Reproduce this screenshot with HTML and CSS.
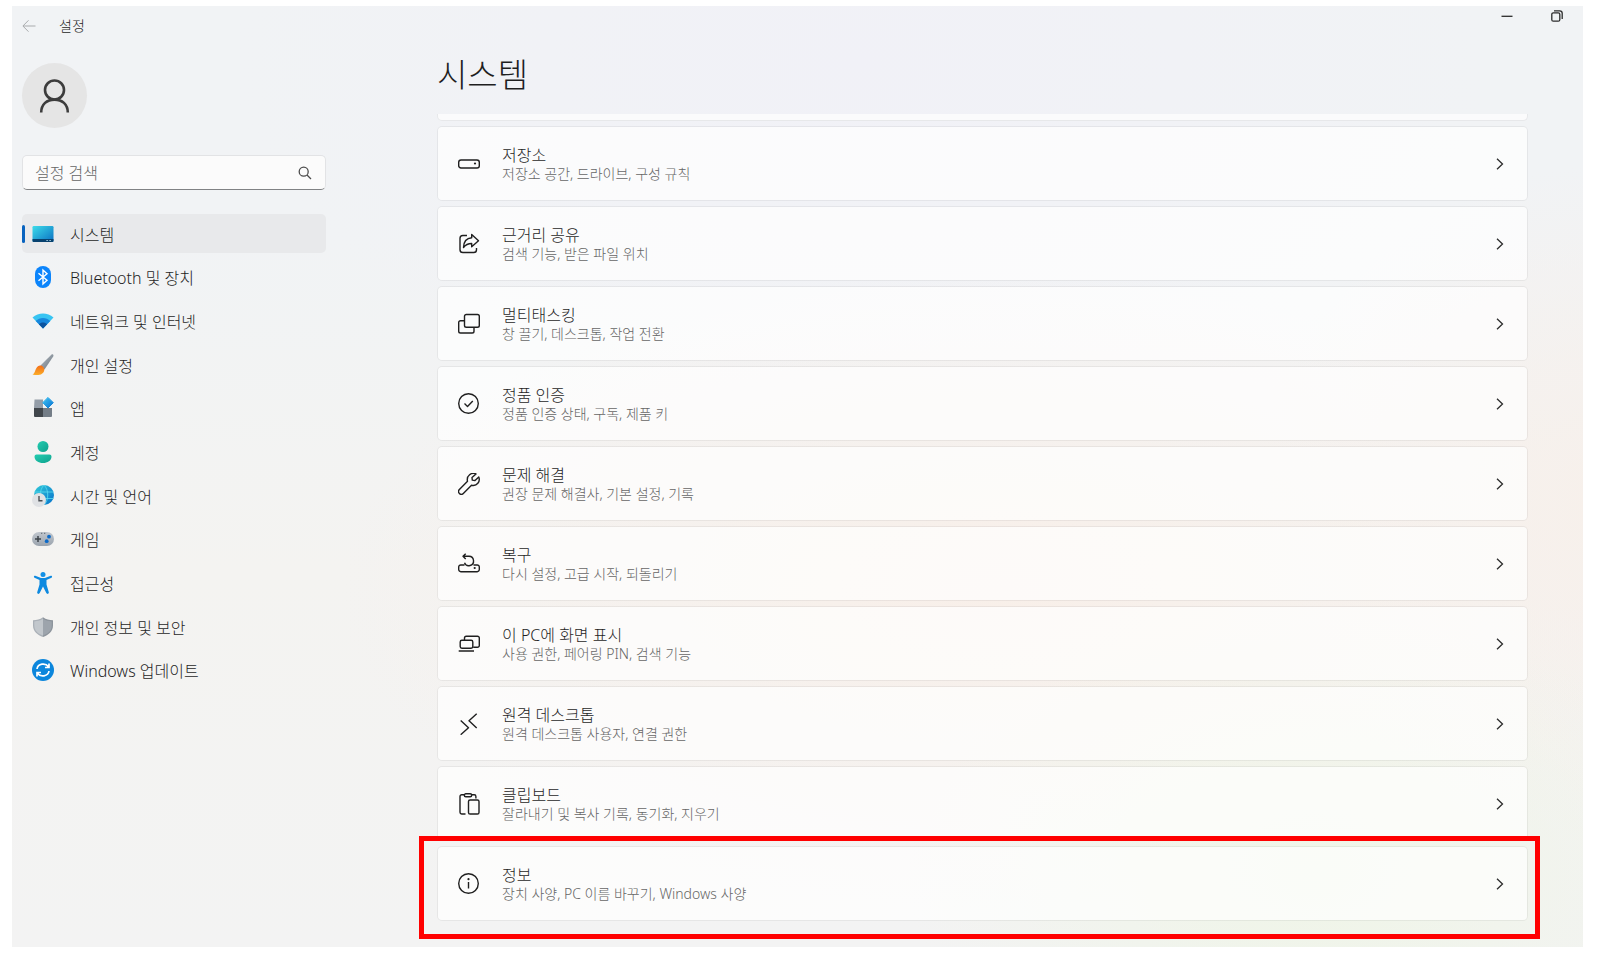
FILE: index.html
```html
<!DOCTYPE html>
<html lang="ko">
<head>
<meta charset="utf-8">
<meta name="viewport" content="width=device-width, initial-scale=1">
<title>설정</title>
<link rel="stylesheet" href="styles.css">
</head>
<body>
<div class="window">
  <header class="titlebar">
    <button class="back" type="button" aria-label="뒤로">
      <svg width="14" height="14" viewBox="0 0 14 14"><path d="M13.5 7H1M6.5 1.3L.9 7l5.600 5.700"/></svg>
    </button>
    <span class="app-name">설정</span>
    <div class="window-buttons">
      <button type="button" aria-label="최소화"><svg width="12" height="12" viewBox="0 0 12 12"><path d="M.5 6.300h11"/></svg></button>
      <button type="button" aria-label="이전 크기로 복원"><svg width="12" height="12" viewBox="0 0 12 12"><rect x=".8" y="2.800" width="8" height="8.400" rx="1.500"/><path d="M3 .8h5.700A2.500 2.500 0 0 1 11.200 3.300v5.700"/></svg></button>
    </div>
  </header>
  <div class="layout">
    <aside class="sidebar">
      <button class="avatar" type="button" aria-label="계정">
        <svg width="31" height="34" viewBox="0 0 31 34"><circle cx="15.500" cy="11" r="9.500"/><path d="M2.200 33.500C2.200 25 8 20.600 15.500 20.600S28.800 25 28.800 33.500"/></svg>
      </button>
      <form class="search">
        <input type="search" placeholder="설정 검색" aria-label="설정 검색">
        <button type="submit" aria-label="검색"><svg width="14" height="14" viewBox="0 0 14 14"><circle cx="5.700" cy="5.700" r="4.500"/><path d="M9 9l4 4"/></svg></button>
      </form>
      <nav class="nav" aria-label="설정 범주">
        <a class="nav-item current" href="#system" aria-current="page">
          <svg width="22" height="22" viewBox="0 0 22 22"><defs><linearGradient id="g-sys" x1="0" y1="0" x2="1" y2="1"><stop offset="0" stop-color="#3ddcea"/><stop offset="1" stop-color="#0a6fc2"/></linearGradient></defs><rect x=".5" y="3" width="21" height="16" rx="1.200" fill="url(#g-sys)"/><path d="M.5 16h21v1.800a1.200 1.200 0 0 1-1.200 1.200H1.700A1.200 1.200 0 0 1 .5 17.800z" fill="#08426f"/><path d="M14.500 17.500h1.200M17.500 17.500h1.200" stroke="#c7e8f7" stroke-width="1.200"/></svg>
          <span>시스템</span></a>
        <a class="nav-item" href="#bluetooth">
          <svg width="22" height="22" viewBox="0 0 22 22"><rect x="3" width="16" height="22" rx="8" fill="#0b84fb"/><path d="M6.500 7.300l8.500 7-4 3.700V4l4 3.700-8.500 7" fill="none" stroke="#fff" stroke-width="1.400"/></svg>
          <span>Bluetooth 및 장치</span></a>
        <a class="nav-item" href="#network">
          <svg width="22" height="22" viewBox="0 0 22 22"><path d="M.5 7.500C6.500 2 15.500 2 21.500 7.500L11 18.500z" fill="#38c4f2"/><path d="M3.700 10.900c4.200-4 10.400-4 14.600 0L11 18.500z" fill="#1787dc"/><path d="M6.900 14.200c2.300-2.200 5.900-2.200 8.200 0L11 18.500z" fill="#0b539f"/></svg>
          <span>네트워크 및 인터넷</span></a>
        <a class="nav-item" href="#personalization">
          <svg width="22" height="22" viewBox="0 0 22 22"><defs><linearGradient id="g-br" x1="0" y1="0" x2="1" y2="1"><stop offset="0" stop-color="#b4bcc4"/><stop offset="1" stop-color="#69737d"/></linearGradient><linearGradient id="g-tip" x1="0" y1="0" x2="0" y2="1"><stop offset="0" stop-color="#f36d18"/><stop offset="1" stop-color="#fbad28"/></linearGradient></defs><path d="M8.500 11.500L19.300.7c1.300-1 2.700.2 1.900 1.700L12.500 15.500z" fill="url(#g-br)"/><path d="M8 11.500c2-.2 4.400 2 4.300 4.200-.4 5.200-6.300 6.300-11.800 4.700 3.700-1.400 2.300-8.400 7.500-8.900z" fill="url(#g-tip)"/></svg>
          <span>개인 설정</span></a>
        <a class="nav-item" href="#apps">
          <svg width="22" height="22" viewBox="0 0 22 22"><defs><linearGradient id="g-app" x1="0" y1="0" x2="1" y2="1"><stop offset="0" stop-color="#42c6f5"/><stop offset="1" stop-color="#0871d0"/></linearGradient></defs><path d="M2.500 2.500H11V11H2z" fill="#949da8"/><path d="M2 11h9v9H3a1 1 0 0 1-1-1z" fill="#41464c"/><path d="M11 11h9v8a1 1 0 0 1-1 1h-8z" fill="#747d87"/><path d="M16 .4l5.300 5.300L16 11l-5.300-5.300z" fill="url(#g-app)" stroke="url(#g-app)" stroke-linejoin="round"/></svg>
          <span>앱</span></a>
        <a class="nav-item" href="#accounts">
          <svg width="22" height="22" viewBox="0 0 22 22"><defs><linearGradient id="g-acc" x1="0" y1="0" x2="1" y2="1"><stop offset="0" stop-color="#24cdb1"/><stop offset="1" stop-color="#0da18d"/></linearGradient></defs><circle cx="11" cy="5.500" r="5.500" fill="url(#g-acc)"/><path d="M4.500 13.500h13a2 2 0 0 1 2 2c0 4.300-4 6.500-8.500 6.500s-8.500-2.200-8.500-6.500a2 2 0 0 1 2-2z" fill="url(#g-acc)"/></svg>
          <span>계정</span></a>
        <a class="nav-item" href="#time">
          <svg width="22" height="22" viewBox="0 0 22 22"><defs><linearGradient id="g-gl" x1="0" y1="0" x2="1" y2="1"><stop offset="0" stop-color="#32cbd9"/><stop offset="1" stop-color="#0670cb"/></linearGradient></defs><circle cx="12" cy="10" r="10" fill="url(#g-gl)"/><path d="M2.500 7h19M2.500 13.500h19M12 0c-5 5-5 15 0 20M12 0c5 5 5 15 0 20" fill="none" stroke="#5bdcf0" stroke-width=".8"/><circle cx="7" cy="15" r="7" fill="#dfe1e4"/><path d="M7 11v4.800h3.500" fill="none" stroke="#4b5056" stroke-width="1.400"/></svg>
          <span>시간 및 언어</span></a>
        <a class="nav-item" href="#gaming">
          <svg width="22" height="22" viewBox="0 0 22 22"><defs><linearGradient id="g-gm" x1="0" y1="0" x2="0" y2="1"><stop offset="0" stop-color="#c1c7ce"/><stop offset="1" stop-color="#9ba4ae"/></linearGradient></defs><rect y="4" width="22" height="14" rx="7" fill="url(#g-gm)"/><path d="M6 8v6M3 11h6" stroke="#3d4349" stroke-width="1.500"/><path d="M9 5.300h1.300M12 5.300h1.300" stroke="#5d666f"/><circle cx="17" cy="8.700" r="1.900" fill="#0c6ac8"/><circle cx="14.700" cy="13.200" r="1.900" fill="#0c6ac8"/></svg>
          <span>게임</span></a>
        <a class="nav-item" href="#accessibility">
          <svg width="22" height="22" viewBox="0 0 22 22"><circle cx="11" cy="2.600" r="2.500" fill="#1290e6"/><path d="M3.300 3.700L9 6h4l5.700-2.300c1.400-.4 1.900 1.500.8 2L14.500 8v4.500l2.300 7.700c.4 1.800-1.900 2.300-2.500.9L11 14.500l-3.300 6.600c-.6 1.400-2.900.9-2.500-.9l2.300-7.700V8l-5-2.300c-1.100-.5-.6-2.400.8-2z" fill="#0d89e0"/></svg>
          <span>접근성</span></a>
        <a class="nav-item" href="#privacy">
          <svg width="22" height="22" viewBox="0 0 22 22"><path d="M11 1.200c3.400 2.300 6 2.700 10 3v5.300c0 6-4.500 9.500-10 11.500z" fill="#8d949c"/><path d="M11 1.200c-3.400 2.300-6 2.700-10 3v5.300c0 6 4.500 9.500 10 11.500z" fill="#aab0b7"/><path d="M11 2.700c3 1.800 5.300 2.300 8.700 2.700v4.100c0 5-3.700 8.200-8.700 10.100z" fill="#9da4ac"/><path d="M11 2.700C8 4.500 5.700 5 2.300 5.400v4.100c0 5 3.700 8.200 8.700 10.100z" fill="#c2c7cc"/></svg>
          <span>개인 정보 및 보안</span></a>
        <a class="nav-item" href="#update">
          <svg width="22" height="22" viewBox="0 0 22 22"><circle cx="11" cy="11" r="11" fill="#0c86dc"/><path d="M5 10c.8-5.500 8.500-6.500 11.500-2.300M17 4.500v4h-4M17 12c-.8 5.500-8.500 6.500-11.500 2.300M5 17.500v-4h4" fill="none" stroke="#fff" stroke-width="1.700"/></svg>
          <span>Windows 업데이트</span></a>
      </nav>
    </aside>
    <main class="content">
      <h1>시스템</h1>
      <div class="cards">
        <div class="card-edge"></div>
        <a class="card" href="#storage">
          <svg class="icon" width="22" height="22" viewBox="0 0 22 22"><rect x=".7" y="7" width="20.600" height="8" rx="2.300"/><circle class="dot" cx="17" cy="10.500" r="1.100"/></svg>
          <span class="text"><span class="name">저장소</span><span class="desc">저장소 공간, 드라이브, 구성 규칙</span></span>
          <svg class="chevron" width="8" height="12" viewBox="0 0 8 12"><path d="M1 .7L6.500 6 1 11.300"/></svg></a>
        <a class="card" href="#share">
          <svg class="icon" width="22" height="22" viewBox="0 0 22 22"><path d="M9 2.500H4.800A2.800 2.800 0 0 0 2 5.300v11.400a2.800 2.800 0 0 0 2.800 2.800h10.900a2.800 2.800 0 0 0 2.800-2.800V15M13.700 1.500L20.500 7.700l-6.800 6.100v-3.300c-3.700 0-6 1-8.200 4C5.700 9 8.500 5.200 13.700 4.800z"/></svg>
          <span class="text"><span class="name">근거리 공유</span><span class="desc">검색 기능, 받은 파일 위치</span></span>
          <svg class="chevron" width="8" height="12" viewBox="0 0 8 12"><path d="M1 .7L6.500 6 1 11.300"/></svg></a>
        <a class="card" href="#multitasking">
          <svg class="icon" width="22" height="22" viewBox="0 0 22 22"><rect x="6.500" y="1.500" width="14.800" height="12.700" rx="1.800"/><path d="M6.500 7.700h-4A1.800 1.800 0 0 0 .7 9.500v8.700A1.800 1.800 0 0 0 2.500 20h11.700a1.800 1.800 0 0 0 1.800-1.800v-4"/></svg>
          <span class="text"><span class="name">멀티태스킹</span><span class="desc">창 끌기, 데스크톱, 작업 전환</span></span>
          <svg class="chevron" width="8" height="12" viewBox="0 0 8 12"><path d="M1 .7L6.500 6 1 11.300"/></svg></a>
        <a class="card" href="#activation">
          <svg class="icon" width="22" height="22" viewBox="0 0 22 22"><circle cx="10.500" cy="10.500" r="9.800"/><path d="M6.500 10.500l3 3 5.300-5.500"/></svg>
          <span class="text"><span class="name">정품 인증</span><span class="desc">정품 인증 상태, 구독, 제품 키</span></span>
          <svg class="chevron" width="8" height="12" viewBox="0 0 8 12"><path d="M1 .7L6.500 6 1 11.300"/></svg></a>
        <a class="card" href="#troubleshoot">
          <svg class="icon" width="22" height="22" viewBox="0 0 22 22"><path d="M18 .9C13.500-1 8.200 2.500 9.500 8.300L1.400 16.500a2.700 2.700 0 0 0 3.900 3.900l8.200-8.200c5.500 1.300 9-3.800 7.300-8.200L17 7.500l-2.700-.4-.3-2.500z"/></svg>
          <span class="text"><span class="name">문제 해결</span><span class="desc">권장 문제 해결사, 기본 설정, 기록</span></span>
          <svg class="chevron" width="8" height="12" viewBox="0 0 8 12"><path d="M1 .7L6.500 6 1 11.300"/></svg></a>
        <a class="card" href="#recovery">
          <svg class="icon" width="22" height="22" viewBox="0 0 22 22"><path d="M6.500 12H2.800A2.100 2.100 0 0 0 .7 14.100v2.500a2.100 2.100 0 0 0 2.100 2.100h16.400a2.100 2.100 0 0 0 2.100-2.100v-2.500A2.100 2.100 0 0 0 19.200 12h-3.700M5.200 3.300H11a4.700 4.700 0 1 1-4.500 6.500M7.700.7L5 3.300 7.700 6"/><circle class="dot" cx="16.700" cy="15" r="1.100"/></svg>
          <span class="text"><span class="name">복구</span><span class="desc">다시 설정, 고급 시작, 되돌리기</span></span>
          <svg class="chevron" width="8" height="12" viewBox="0 0 8 12"><path d="M1 .7L6.500 6 1 11.300"/></svg></a>
        <a class="card" href="#projecting">
          <svg class="icon" width="22" height="22" viewBox="0 0 22 22"><rect x="2.200" y="7.200" width="12.600" height="8" rx="1.700"/><path d="M6.500 7V5a1.800 1.800 0 0 1 1.800-1.800h11.200A1.800 1.800 0 0 1 21.300 5v7.500a1.800 1.800 0 0 1-1.800 1.800h-4.300M.7 18h15.300"/></svg>
          <span class="text"><span class="name">이 PC에 화면 표시</span><span class="desc">사용 권한, 페어링 PIN, 검색 기능</span></span>
          <svg class="chevron" width="8" height="12" viewBox="0 0 8 12"><path d="M1 .7L6.500 6 1 11.300"/></svg></a>
        <a class="card" href="#remote">
          <svg class="icon" width="22" height="22" viewBox="0 0 22 22"><path d="M2.700 7.500l7.800 7.200-7.800 7M18.700.8L11 7.800l7.700 7.200"/></svg>
          <span class="text"><span class="name">원격 데스크톱</span><span class="desc">원격 데스크톱 사용자, 연결 권한</span></span>
          <svg class="chevron" width="8" height="12" viewBox="0 0 8 12"><path d="M1 .7L6.500 6 1 11.300"/></svg></a>
        <a class="card" href="#clipboard">
          <svg class="icon" width="22" height="22" viewBox="0 0 22 22"><path d="M7.500 21H3.700A1.700 1.700 0 0 1 2 19.300V3.500a1.700 1.700 0 0 1 1.700-1.700h2.600M13.700 1.800h2.500a1.700 1.700 0 0 1 1.700 1.700v2"/><rect x="6.300" y=".7" width="7.400" height="3" rx="1.500"/><rect x="10.500" y="7" width="10.500" height="14" rx="1.600"/></svg>
          <span class="text"><span class="name">클립보드</span><span class="desc">잘라내기 및 복사 기록, 동기화, 지우기</span></span>
          <svg class="chevron" width="8" height="12" viewBox="0 0 8 12"><path d="M1 .7L6.500 6 1 11.300"/></svg></a>
        <a class="card highlighted" href="#about">
          <svg class="icon" width="22" height="22" viewBox="0 0 22 22"><circle cx="10.500" cy="10.500" r="9.800"/><path d="M10.500 9v6.500"/><circle class="dot" cx="10.500" cy="6.200" r="1.100"/></svg>
          <span class="text"><span class="name">정보</span><span class="desc">장치 사양, PC 이름 바꾸기, Windows 사양</span></span>
          <svg class="chevron" width="8" height="12" viewBox="0 0 8 12"><path d="M1 .7L6.500 6 1 11.300"/></svg></a>
      </div>
    </main>
  </div>
</div>
</body>
</html>
```
FILE: styles.css
```css
* { box-sizing: border-box; }

body {
  margin: 0;
  padding: 6px 18px 10px 12px;
  background: #fff;
  color: #1f1f1f;
  font-family: "Noto Sans", "Noto Sans CJK KR", sans-serif;
  font-size: 16px;
  font-weight: 300;
}

button {
  display: flex;
  align-items: center;
  justify-content: center;
  padding: 0;
  border: 0;
  background: none;
  color: inherit;
}

a { color: inherit; text-decoration: none; }
svg { display: block; flex: none; }

.window {
  min-height: calc(100vh - 16px);
  padding-bottom: 26px;
  background:
    radial-gradient(ellipse 26% 28% at 83% 92%, #eff5e7 0%, rgba(239, 245, 231, 0) 100%),
    radial-gradient(ellipse 22% 36% at 101% 53%, #f7f0eb 0%, rgba(247, 240, 235, 0) 100%),
    radial-gradient(ellipse 42% 34% at 63% 62%, #f8efe9 0%, rgba(248, 239, 233, 0) 100%),
    radial-gradient(ellipse 40% 36% at 54% 6%, #f1f1f7 0%, rgba(241, 241, 247, 0) 100%),
    linear-gradient(#f1f3f5 25%, #f4f3f1 60%, #f3f3f3 100%);
}

.titlebar {
  display: flex;
  align-items: center;
  height: 39px;
  padding-left: 10px;
}

.back { width: 14px; height: 24px; }
.back svg { fill: none; stroke: #a9abad; }
.app-name { margin-left: 23px; font-size: 14px; line-height: 20px; }

.window-buttons {
  display: flex;
  align-self: flex-start;
  margin-left: auto;
  padding-right: 1px;
}

.window-buttons button { width: 50px; height: 20px; }
.window-buttons svg { fill: none; stroke: #2c2c2c; stroke-width: 1.300; }

.layout {
  display: grid;
  grid-template-columns: 304px minmax(0, 1fr);
  column-gap: 111px;
  padding: 0 55px 0 10px;
}

.sidebar { padding-top: 18px; }

.avatar {
  width: 65px;
  height: 65px;
  border-radius: 50%;
  background: #e5e5e5;
}

.avatar svg { fill: none; stroke: #3c3c3c; stroke-width: 2.600; }

.search {
  display: flex;
  align-items: center;
  height: 35px;
  margin: 27px 0 24px;
  padding: 0 13px 0 12px;
  border: 1px solid #e2e3e5;
  border-bottom-color: #808284;
  border-radius: 5px;
  background: #fbfbfb;
}

.search input {
  flex: 1;
  min-width: 0;
  padding: 0;
  border: 0;
  outline: 0;
  background: none;
  font: inherit;
}

.search input::placeholder { color: #666; opacity: 1; }
.search svg { fill: none; stroke: #4c4c4c; stroke-width: 1.300; }

.nav {
  display: flex;
  flex-direction: column;
  justify-content: space-between;
  min-height: 476px;
}

.nav-item {
  position: relative;
  display: flex;
  align-items: center;
  gap: 16px;
  height: 39px;
  padding-left: 10px;
  border-radius: 5px;
}

.nav-item.current { background: #e8e9eb; }

.nav-item.current::before {
  content: "";
  position: absolute;
  left: 0;
  width: 3px;
  height: 18px;
  border-radius: 2px;
  background: #0863bf;
}

h1 {
  margin: 0;
  padding: 12px 0 21px;
  font-size: 33px;
  font-weight: 300;
  line-height: 36px;
}

.cards { display: grid; gap: 5px; }

.card-edge {
  height: 7px;
  border: 1px solid #e7e8ea;
  border-top: 0;
  border-radius: 0 0 5px 5px;
  background: #fbfbfc;
}

.card {
  position: relative;
  display: flex;
  align-items: center;
  height: 75px;
  padding: 0 23px 0 20px;
  border: 1px solid rgba(0, 0, 0, 0.05);
  border-radius: 5px;
  background: rgba(255, 255, 255, 0.7);
  background-clip: padding-box;
}

.icon { fill: none; stroke: #1f1f1f; stroke-width: 1.400; stroke-linejoin: round; }
.icon .dot { fill: #1f1f1f; stroke: none; }

.text { display: grid; flex: 1; margin-left: 22px; }
.name { line-height: 20px; }
.desc { color: #666; font-size: 14px; line-height: 18px; }
.chevron { fill: none; stroke: #2c2c2c; stroke-width: 1.300; }

.highlighted::after {
  content: "";
  position: absolute;
  inset: -11px -13px -19px -19px;
  border: 5px solid #f00;
  pointer-events: none;
}
```
